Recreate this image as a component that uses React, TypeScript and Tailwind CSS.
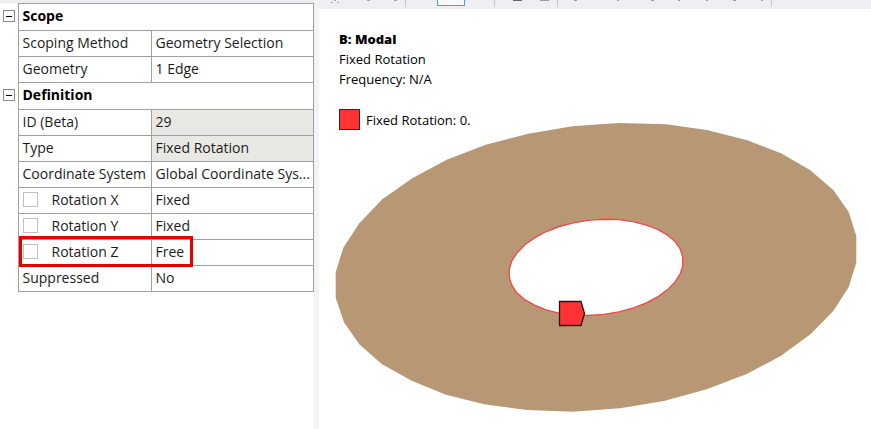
import React from "react";

type Property = {
  label: string;
  value: string;
  readOnly?: boolean;
  parameter?: boolean;
  highlighted?: boolean;
};

const sections: { title: string; rows: Property[] }[] = [
  {
    title: "Scope",
    rows: [
      { label: "Scoping Method", value: "Geometry Selection" },
      { label: "Geometry", value: "1 Edge" },
    ],
  },
  {
    title: "Definition",
    rows: [
      { label: "ID (Beta)", value: "29", readOnly: true },
      { label: "Type", value: "Fixed Rotation", readOnly: true },
      { label: "Coordinate System", value: "Global Coordinate Sys..." },
      { label: "Rotation X", value: "Fixed", parameter: true },
      { label: "Rotation Y", value: "Fixed", parameter: true },
      { label: "Rotation Z", value: "Free", parameter: true, highlighted: true },
      { label: "Suppressed", value: "No" },
    ],
  },
];

// Outline of the disc, the hole is the same outline at a third of the size
const ring =
  "600,124.3 572.3,126.3 528.3,133.7 485.7,144.7 446.7,159.7 412.7,178 382.3,199.3 359.3,223.3 343.3,247.7 335.7,272.3 335.7,297.7 344,322.3 359.3,344.3 381.7,364 411.7,380.7 446,394.7 484,404.3 527.3,410 572.3,411.7 620,408.3 664,401 706.7,389.3 747.3,373.7 780.7,356 810.7,334 833.3,311 848.7,287 856.3,262.7 856.3,236 848.7,212 833.3,190 810,170 781,153.3 747.3,140.3 706.7,130 666,124.3 620,123";

function PropertyRow({ label, value, readOnly, parameter, highlighted }: Property) {
  return (
    <tr className="h-[26px]">
      <td />
      <th scope="row" className="relative border border-[#a0a0a0] p-0 pb-0.5 pl-1 text-left font-normal">
        {parameter ? (
          <label className="flex items-center gap-3.5">
            <input
              type="checkbox"
              className="size-[15px] shrink-0 appearance-none border border-[#c4bfc2] bg-white"
            />
            {label}
          </label>
        ) : (
          label
        )}
        {highlighted && (
          <span className="pointer-events-none absolute -top-1 -right-[42px] -bottom-0.5 left-0 z-10 border-3 border-[#e60000]" />
        )}
      </th>
      <td className={`border border-[#a0a0a0] p-0 pb-0.5 pl-1 ${readOnly ? "bg-[#e9e8e5]" : "bg-white"}`}>
        {value}
      </td>
    </tr>
  );
}

function DetailsPanel() {
  return (
    <aside className="w-[314px] shrink-0 border-t-3 border-[#ededf0] bg-white">
      <table className="w-full table-fixed border-collapse font-['Open_Sans',sans-serif] text-sm leading-5 whitespace-nowrap text-[#1c1c1c]">
        <colgroup>
          <col className="w-[18px]" />
          <col className="w-[133px]" />
          <col />
        </colgroup>
        {sections.map((section) => (
          <tbody key={section.title}>
            <tr className="h-[27px]">
              <td className="p-0 pb-0.5 pl-[3px]">
                <button
                  type="button"
                  aria-label={`Collapse ${section.title}`}
                  className="flex size-3 items-center justify-center border border-[#8c8c8c] bg-white"
                >
                  <span className="h-px w-1.5 bg-black" />
                </button>
              </td>
              <th colSpan={2} scope="rowgroup" className="border border-[#a0a0a0] p-0 pb-0.5 pl-1 text-left font-bold text-black">
                {section.title}
              </th>
            </tr>
            {section.rows.map((row) => (
              <PropertyRow key={row.label} {...row} />
            ))}
          </tbody>
        ))}
      </table>
    </aside>
  );
}

function Toolbar() {
  return (
    <div className="flex h-[9px] items-start overflow-hidden bg-[#eeeef3]">
      <svg className="h-[9px] w-[118px] shrink-0" viewBox="319 0 118 9" aria-hidden="true">
        <path d="M334 0h2v1h-2zM331 2h2v1h-2zM337 2h2v1h-2zM367 0h3v1h-3zM394 0h3v1h-3z" fill="#a5a5ad" />
        <path d="M405.5 0v7" stroke="#c6c6cc" />
      </svg>
      <button
        type="button"
        aria-label="Selected tool"
        className="h-1.5 w-7 shrink-0 border-x border-b border-[#4a9df0] bg-[#f7f9fd]"
      />
      <svg className="h-[9px] w-[406px] shrink-0" viewBox="465 0 406 9" aria-hidden="true">
        <path d="M494.5 0v7M557.5 0v7M771.5 0v7" stroke="#c6c6cc" />
        <path d="M513 0h9v1h-9z" fill="#66666c" />
        <path
          d="M540 0h9v1h-9zM574 0h3v1h-3zM617 0h2v1h-2zM651 0h3v1h-3zM678 0h2v1h-2zM706 0h2v1h-2zM733 0h3v1h-3zM761 0h2v1h-2z"
          fill="#9b9ba2"
        />
      </svg>
    </div>
  );
}

function Viewport() {
  return (
    <div className="grid bg-white">
      <svg className="col-start-1 row-start-1 w-full" viewBox="319 9 552 420" role="img" aria-label="Fixed rotation on the inner edge">
        <polygon points={ring} fill="#b89874" />
        <polygon
          points={ring}
          transform="translate(596 267.4) scale(0.3333) translate(-596 -267.4)"
          fill="#fff"
          stroke="#f04848"
          strokeWidth="4"
        />
        <path d="M559.5 301.5h21.5l3.5 12l-3.5 12h-21.5z" fill="#ff3333" stroke="#2a1212" strokeWidth="1.3" />
      </svg>
      <div className="z-10 col-start-1 row-start-1 self-start pt-5 pl-5 font-['Open_Sans',sans-serif] text-[13px] leading-5 text-black">
        <h1 className="font-extrabold">B: Modal</h1>
        <p>Fixed Rotation</p>
        <p>Frequency: N/A</p>
        <div className="mt-5 flex items-center gap-1.5">
          <span className="size-[21px] border border-[#4a1c1c] bg-[#ff3333]" />
          Fixed Rotation: 0.
        </div>
      </div>
    </div>
  );
}

export default function App() {
  return (
    <div className="flex min-h-screen bg-white">
      <DetailsPanel />
      {/* Splitter */}
      <div className="w-[5px] shrink-0 bg-[#f3f3f6]" />
      <main className="min-w-0 flex-1">
        <Toolbar />
        <Viewport />
      </main>
    </div>
  );
}
